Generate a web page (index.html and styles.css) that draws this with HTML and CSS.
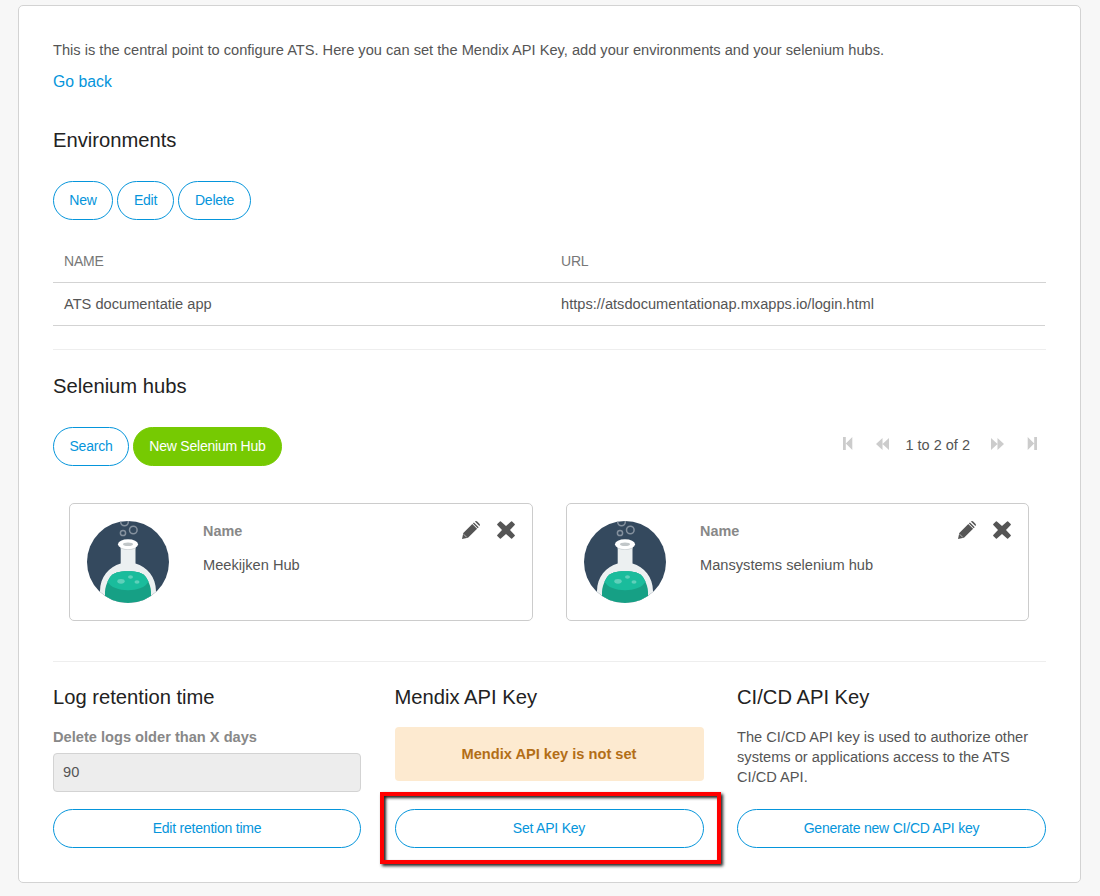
FILE: index.html
```html
<!DOCTYPE html>
<html lang="en">
<head>
<meta charset="utf-8">
<title>ATS configuration</title>
<link rel="stylesheet" href="styles.css">
</head>
<body>
<svg class="defs" width="0" height="0" aria-hidden="true">
  <defs>
    <clipPath id="disc"><circle cx="41" cy="41" r="41"/></clipPath>
    <symbol id="flask" viewBox="0 0 82 82">
      <g clip-path="url(#disc)">
        <rect width="82" height="82" fill="#34495e"/>
        <g fill="none" stroke="#85919e" stroke-width="1.5">
          <circle cx="37.5" cy="1" r="3.8"/><circle cx="46.3" cy="9" r="3.8"/><circle cx="36" cy="12" r="2.6"/>
        </g>
        <path d="M33.7 23h14.8v19.4C60 45.500 69 56 69 70v12H13V70C13 56 22 45.500 33.700 42.400z" fill="#ecf0f1"/>
        <path d="M33.700 25h14.800v2.500q-7.400 3-14.800 0z" fill="#cfd4d7"/>
        <ellipse cx="41" cy="23.300" rx="10" ry="5" fill="#fff"/>
        <ellipse cx="41" cy="23.300" rx="5" ry="1.800" fill="#c1c6c8"/>
        <path d="M41 50.300c-9 0-15 1.200-18.500 6.700C19.500 62 18 67 18 71v4c5 5 14 7 23 7s18-2 23-7v-4c0-4-1.500-9-4.500-14C56 51.500 50 50.300 41 50.300z" fill="#16a085"/>
        <path d="M41 50.300c-9 0-15 1.200-18.500 6.700l-2 3.500c3 6 11.500 8.700 20.500 8.700s17.500-2.700 20.500-8.700l-2-3.500C56 51.500 50 50.300 41 50.300z" fill="#1abc9c"/>
        <g fill="#5fd0ba"><ellipse cx="34" cy="60.300" rx="3.700" ry="2.400"/><ellipse cx="43.500" cy="56" rx="2.500" ry="1.700"/><ellipse cx="50" cy="61" rx="2.500" ry="1.700"/></g>
      </g>
    </symbol>
    <symbol id="pencil" viewBox="0 0 18 18">
      <path d="M0 18l1.300-6L10.300 3l4.800 4.800L6 16.700zM10.900 2.400l1-1 4.800 4.800-1 1zM12.900.6c.7-.7 1.600-.7 2.300 0l2.200 2.200c.7.7.7 1.600 0 2.300z"/>
      <path d="M1.600 13.200l3.200 3.200" stroke="#fff" stroke-width=".6" fill="none"/>
    </symbol>
    <symbol id="cross" viewBox="0 0 18 18">
      <path d="M3.900.4L9 5 14.100.4q.5-.4 1 0L17.700 3q.4.500 0 1L13 9l4.700 5q.4.500 0 1l-2.600 2.600q-.5.400-1 0L9 13l-5.100 4.600q-.5.400-1 0L.3 15q-.4-.5 0-1L5 9 .3 4q-.4-.5 0-1L2.900.4q.5-.4 1 0z"/>
    </symbol>
    <symbol id="step" viewBox="0 0 10 13"><path d="M0 0h2.800v13H0zM9.300 0v13L2.800 6.500z"/></symbol>
    <symbol id="fast" viewBox="0 0 13 12"><path d="M6.500 0v12L0 6zM13 0v12L6.500 6z"/></symbol>
  </defs>
</svg>
<main class="panel">
  <p class="intro">This is the central point to configure ATS. Here you can set the Mendix API Key, add your environments and your selenium hubs.</p>
  <a class="back">Go back</a>

  <section class="environments">
    <h2>Environments</h2>
    <div class="toolbar">
      <button class="btn new">New</button><button class="btn edit">Edit</button><button class="btn delete">Delete</button>
    </div>
    <div class="grid">
      <div class="grid-row grid-head"><span>NAME</span><span>URL</span></div>
      <div class="grid-row"><span>ATS documentatie app</span><span>https://atsdocumentationap.mxapps.io/login.html</span></div>
    </div>
  </section>

  <section class="hubs">
    <h2>Selenium hubs</h2>
    <div class="toolbar">
      <button class="btn search">Search</button><button class="btn primary">New Selenium Hub</button>
      <div class="pager">
        <svg class="step"><use href="#step"/></svg>
        <svg class="fast"><use href="#fast"/></svg>
        <span>1 to 2 of 2</span>
        <svg class="fast flip"><use href="#fast"/></svg>
        <svg class="step flip"><use href="#step"/></svg>
      </div>
    </div>
    <div class="cards">
      <article class="card">
        <svg class="avatar"><use href="#flask"/></svg>
        <div class="card-text"><b>Name</b><span>Meekijken Hub</span></div>
        <div class="actions"><svg><use href="#pencil"/></svg><svg><use href="#cross"/></svg></div>
      </article>
      <article class="card">
        <svg class="avatar"><use href="#flask"/></svg>
        <div class="card-text"><b>Name</b><span>Mansystems selenium hub</span></div>
        <div class="actions"><svg><use href="#pencil"/></svg><svg><use href="#cross"/></svg></div>
      </article>
    </div>
  </section>

  <section class="settings">
    <div class="setting">
      <h2>Log retention time</h2>
      <label>Delete logs older than X days</label>
      <div class="field">90</div>
      <button class="btn">Edit retention time</button>
    </div>
    <div class="setting">
      <h2>Mendix API Key</h2>
      <div class="alert">Mendix API key is not set</div>
      <div class="marked"><button class="btn">Set API Key</button><span class="marker"></span></div>
    </div>
    <div class="setting">
      <h2>CI/CD API Key</h2>
      <p>The CI/CD API key is used to authorize other systems or applications access to the ATS CI/CD API.</p>
      <button class="btn">Generate new CI/CD API key</button>
    </div>
  </section>
</main>
</body>
</html>
```
FILE: styles.css
```css
* { box-sizing: border-box; }
body {
  margin: 0;
  height: 896px;
  padding: 5px 19px 0 18px;
  overflow: hidden;
  background: #f7f7f7;
  color: #555;
  font: 14.64px/20px "Liberation Sans", Arial, sans-serif;
}
.defs { position: absolute; }
.panel {
  height: 878px;
  padding: 34px 34px 0;
  background: #fff;
  border: 1px solid #d3d3d3;
  border-radius: 5px;
}
p, h2 { margin: 0; font-weight: 400; }
.intro { white-space: nowrap; }
.back { display: block; margin-top: 12px; color: #0595db; font-size: 15.8px; }
h2 { height: 26px; color: #222; font-size: 20.2px; line-height: 26px; }
.environments { height: 223px; margin-top: 35px; border-bottom: 1px solid #eee; }
.toolbar { display: flex; gap: 4px; margin-top: 28px; }
.btn {
  height: 39px;
  padding: 0 0 2px;
  border: 1px solid #0595db;
  border-radius: 20px;
  background: #fff;
  color: #0595db;
  font: 14px/20px "Liberation Sans", Arial, sans-serif;
  letter-spacing: -0.22px;
}
.new { width: 60px; }
.edit { width: 57px; }
.delete { width: 73px; }
.search { width: 76px; }
.primary { width: 149px; border-color: #76ca02; background: #76ca02; color: #fff; }
.grid { margin-top: 20px; }
.grid-row {
  display: grid;
  grid-template-columns: 497px 1fr;
  height: 43px;
  margin-right: 1px;
  padding-left: 11px;
  border-bottom: 1px solid #d3d3d3;
  line-height: 42px;
}
.grid-head { margin-right: 0; color: #777; font-size: 14px; letter-spacing: -0.2px; }
.hubs { height: 312px; padding-top: 23px; border-bottom: 1px solid #eee; }
.pager { display: flex; align-items: center; height: 35px; margin-left: auto; margin-right: 9px; fill: #ccc; font-size: 14.5px; }
.pager .step { width: 10px; height: 13px; margin-bottom: 2px; }
.pager .fast { width: 13px; height: 12px; margin: 0 17px 2px 23px; }
.pager .flip { transform: scaleX(-1); }
.pager .fast.flip { margin: 0 23px 2px 21px; }
.cards { display: grid; grid-template-columns: 464px 463px; gap: 33px; margin: 37px 0 0 16px; }
.card { display: flex; height: 118px; padding: 17px; border: 1px solid #ccc; border-radius: 5px; }
.avatar { width: 82px; height: 82px; }
.card-text { display: flex; flex-direction: column; gap: 14px; margin-left: 34px; }
.card b, label { color: #888; font-weight: 700; }
.card b { font-size: 14.4px; }
.actions { display: flex; gap: 17px; margin-left: auto; fill: #555; }
.actions svg { width: 18px; height: 18px; }
.settings { display: grid; grid-template-columns: 308px 309px 309px; column-gap: 33.5px; padding-top: 22px; }
.setting { display: flex; flex-direction: column; }
.setting > .btn { margin-top: 17px; }
label { margin-top: 17px; }
.field {
  height: 39px;
  margin-top: 6px;
  padding: 0 9px;
  border: 1px solid #d3d3d3;
  border-radius: 4px;
  background: #ededed;
  line-height: 36px;
}
.alert {
  height: 54px;
  margin: 17px 0 28px;
  border-radius: 4px;
  background: #fdead0;
  color: #b36e17;
  font-weight: 700;
  line-height: 54px;
  text-align: center;
}
.marked { position: relative; display: grid; }
.marker {
  position: absolute;
  inset: -17px -17.500px -16px -15px;
  border: 4px solid #f00;
  box-shadow: 2px 2px 3px #222, inset 2px 2px 3px #222;
}
.setting p { height: 65px; margin-top: 17px; }
```
